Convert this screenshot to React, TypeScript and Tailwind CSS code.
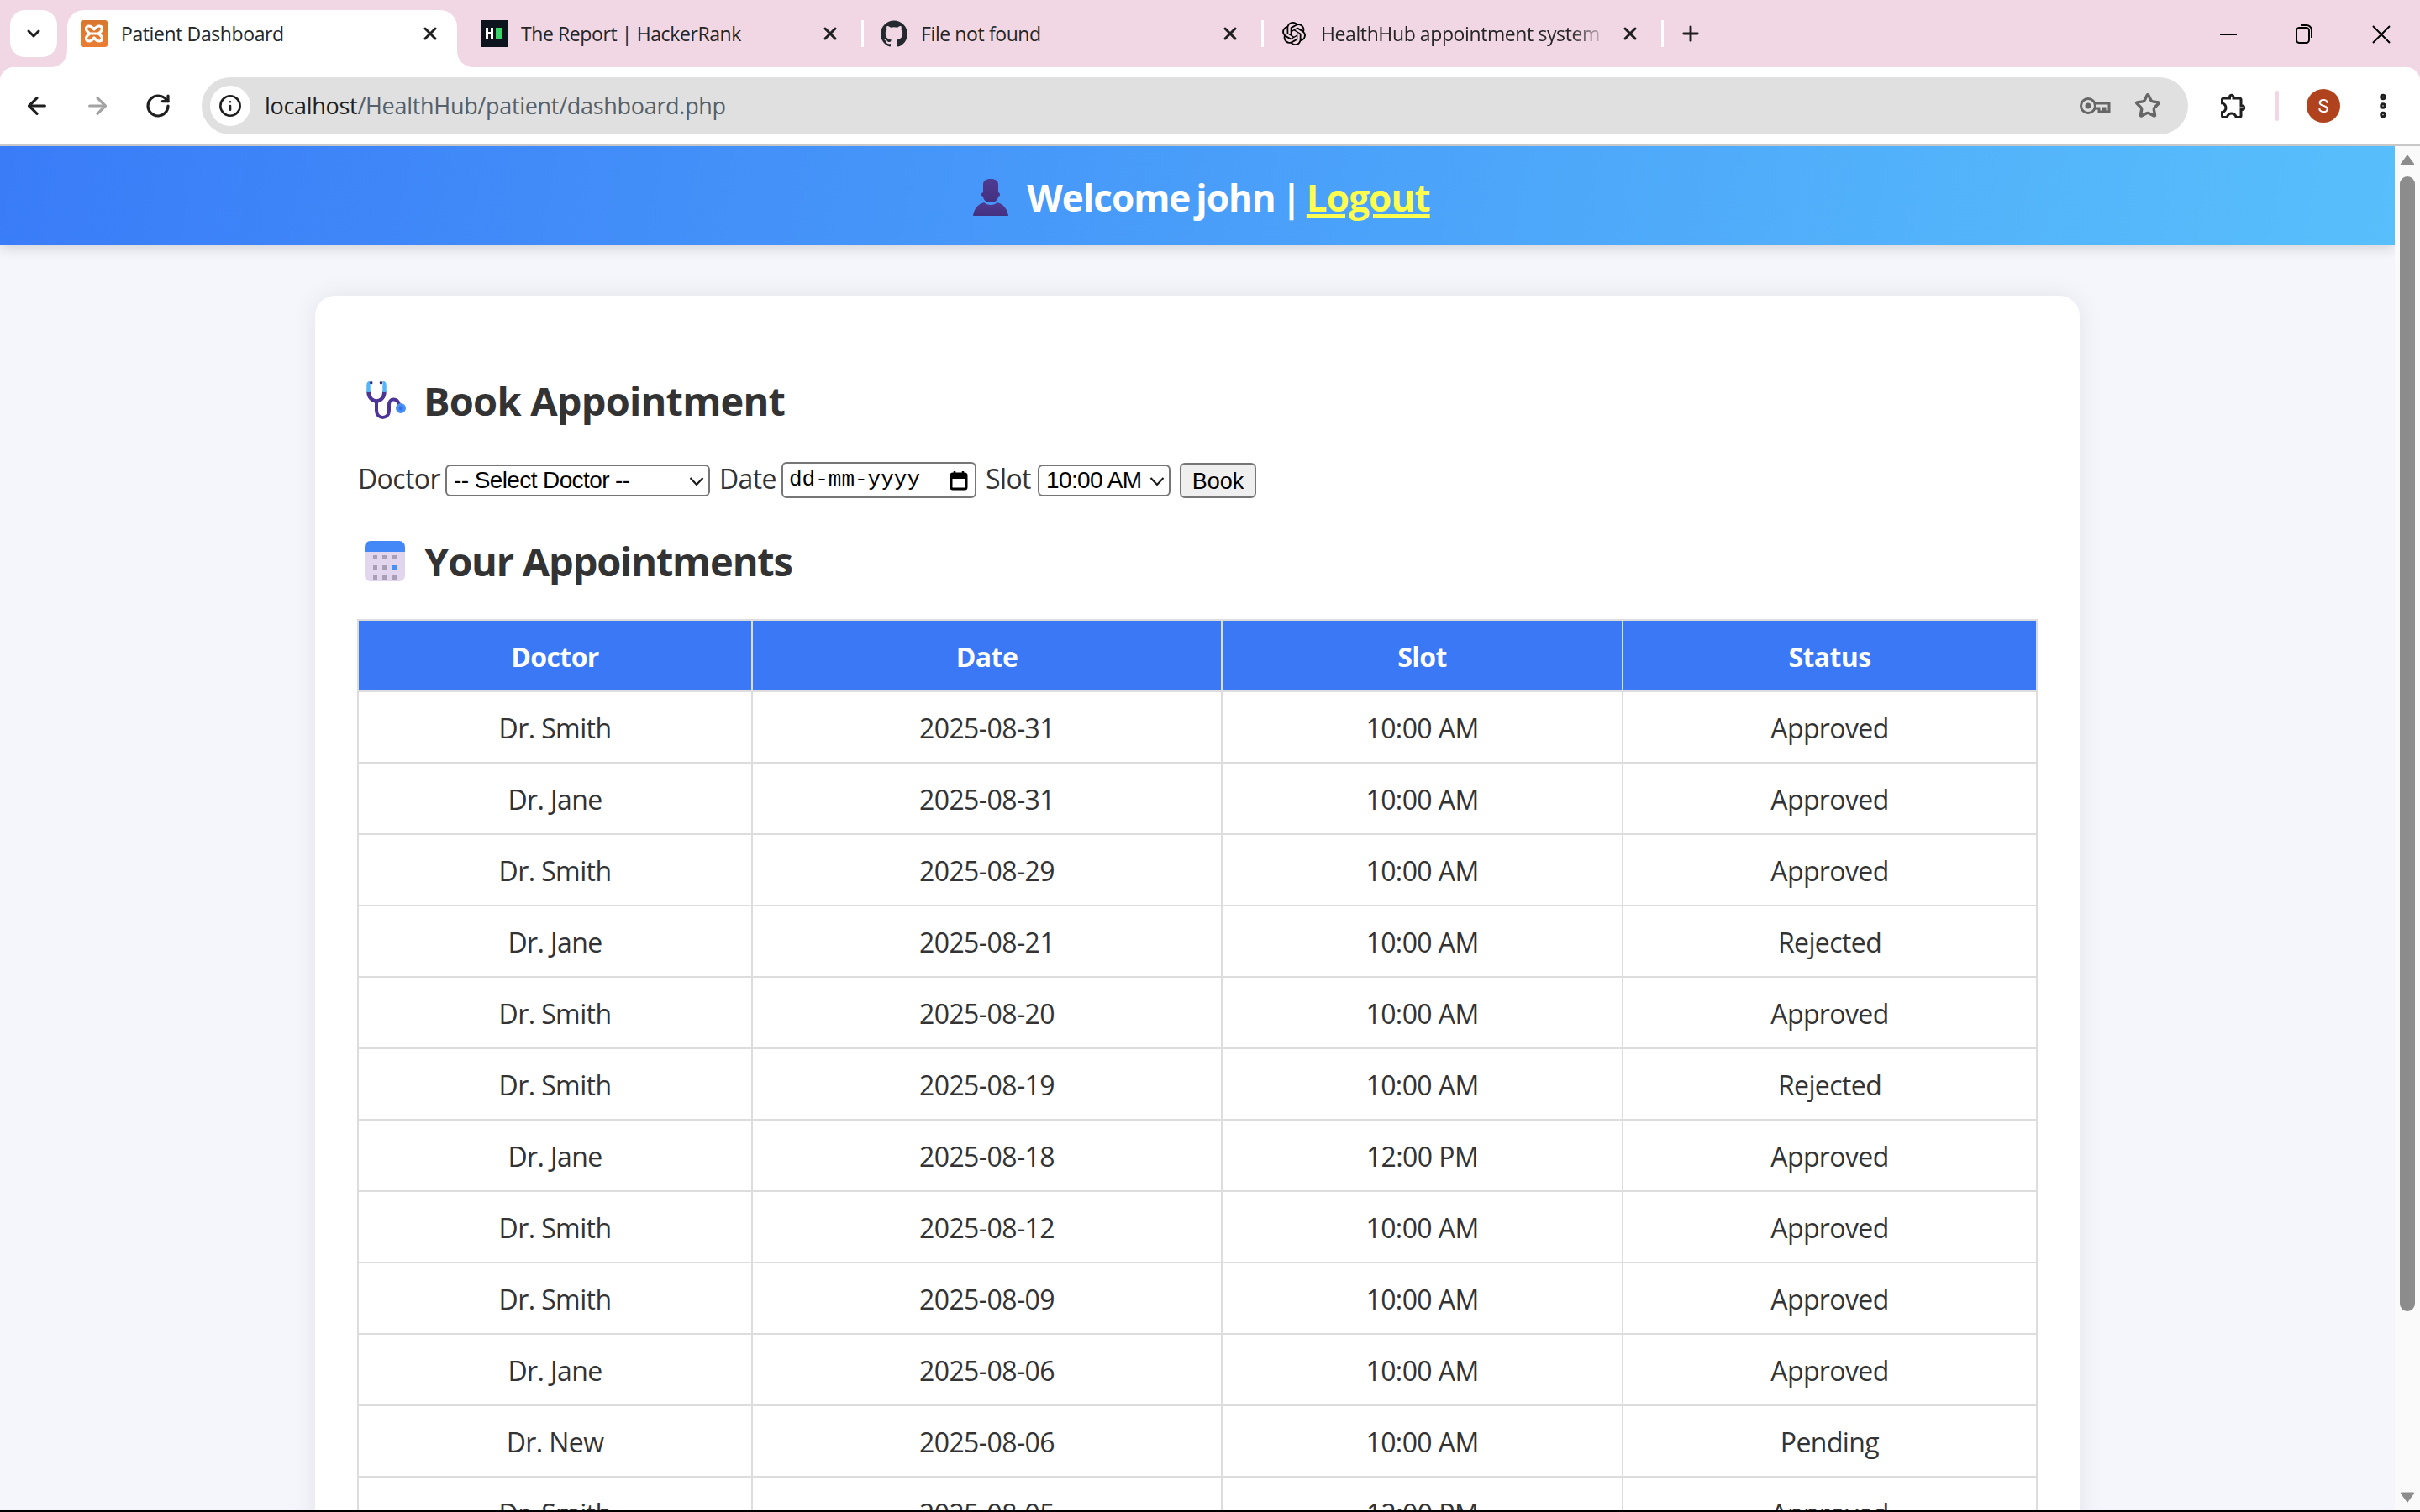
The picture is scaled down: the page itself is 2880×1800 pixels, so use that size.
import { ArrowLeft, ArrowRight, ChevronDown, EllipsisVertical, Info, Plus, RotateCw, Star, X } from "lucide-react";
import { SiGithub, SiOpenai } from "react-icons/si";
import type { ReactNode } from "react";

const sans = "font-['Open_Sans','Noto_Sans',sans-serif]";

const appointments = [
  ["Dr. Smith", "2025-08-31", "10:00 AM", "Approved"],
  ["Dr. Jane", "2025-08-31", "10:00 AM", "Approved"],
  ["Dr. Smith", "2025-08-29", "10:00 AM", "Approved"],
  ["Dr. Jane", "2025-08-21", "10:00 AM", "Rejected"],
  ["Dr. Smith", "2025-08-20", "10:00 AM", "Approved"],
  ["Dr. Smith", "2025-08-19", "10:00 AM", "Rejected"],
  ["Dr. Jane", "2025-08-18", "12:00 PM", "Approved"],
  ["Dr. Smith", "2025-08-12", "10:00 AM", "Approved"],
  ["Dr. Smith", "2025-08-09", "10:00 AM", "Approved"],
  ["Dr. Jane", "2025-08-06", "10:00 AM", "Approved"],
  ["Dr. New", "2025-08-06", "10:00 AM", "Pending"],
  ["Dr. Smith", "2025-08-05", "12:00 PM", "Approved"],
];

function XamppIcon() {
  return (
    <svg viewBox="0 0 32 32" className="w-8 h-8 shrink-0">
      <defs>
        <linearGradient id="xampp" x1="0" y1="0" x2="0" y2="1">
          <stop offset="0" stopColor="#d9772f" />
          <stop offset="1" stopColor="#ea7d34" />
        </linearGradient>
      </defs>
      <rect width="32" height="32" rx="3" fill="url(#xampp)" />
      <path d="M10 7C6 7 5.500 11 8 13.500L10.500 16 8 18.500C5.500 21 6 25 10 25c3 0 4.500-2 6-4 1.500 2 3 4 6 4 4 0 4.500-4 2-6.500L21.500 16 24 13.500C26.500 11 26 7 22 7c-3 0-4.500 2-6 4-1.500-2-3-4-6-4z" fill="none" stroke="#fff" strokeWidth="3.200" strokeLinejoin="round" />
      <path d="M10.500 16h11" stroke="#fff" strokeWidth="3" />
    </svg>
  );
}

function HackerRankIcon() {
  return (
    <svg viewBox="0 0 32 32" className="w-8 h-8 shrink-0">
      <rect width="32" height="32" fill="#0e141e" />
      <path d="M6 9h3v5h3V9h3v14h-3v-6H9v6H6z" fill="#fff" />
      <rect x="18" y="9" width="8" height="14" fill="#39d26b" />
    </svg>
  );
}

function Tab({ icon, title, active, fade }: { icon: ReactNode; title: string; active?: boolean; fade?: boolean }) {
  return (
    <div className="flex items-start w-[476px] shrink-0">
      <div className={`relative flex items-center w-[464px] h-[68px] pb-3 pl-4 pr-5 rounded-t-[20px] ${active ? "bg-white" : ""}`}>
        {active && (
          <>
            <svg viewBox="0 0 20 20" className="absolute bottom-0 -left-5 w-5 h-5"><path d="M20 0v20H0C12 20 20 12 20 0z" fill="#fff" /></svg>
            <svg viewBox="0 0 20 20" className="absolute bottom-0 -right-5 w-5 h-5"><path d="M0 0v20h20C8 20 0 12 0 0z" fill="#fff" /></svg>
          </>
        )}
        <span className="w-8 h-8 flex items-center justify-center shrink-0">{icon}</span>
        <span className={`ml-4 flex-1 overflow-hidden whitespace-nowrap text-[23px] tracking-[-0.4px] text-[#262626] ${fade ? "[mask-image:linear-gradient(to_left,transparent,black_48px)] mr-3" : ""}`}>
          {title}
        </span>
        <X className="w-6 h-6 shrink-0 text-[#1f1f1f]" strokeWidth={3} />
      </div>
      {!active && <span className="ml-[5px] mt-3 w-[3px] h-8 bg-white" />}
    </div>
  );
}

function TabStrip() {
  return (
    <div className="flex items-start h-20 pt-3 pl-3 bg-[#f1d7e4]">
      <div className="flex items-center justify-center w-14 h-14 rounded-[18px] bg-white mr-3">
        <ChevronDown className="w-6 h-6 text-[#1f1f1f]" strokeWidth={3} />
      </div>
      <Tab active icon={<XamppIcon />} title="Patient Dashboard" />
      <Tab icon={<HackerRankIcon />} title="The Report | HackerRank" />
      <Tab icon={<SiGithub className="w-8 h-8 text-[#24292f]" />} title="File not found" />
      <Tab fade icon={<SiOpenai className="w-7 h-7 text-black" />} title="HealthHub appointment system" />
      <Plus className="w-7 h-7 mt-[14px] ml-[14px] text-[#1f1f1f]" strokeWidth={2.5} />
      <div className="ml-auto flex items-center h-14 pr-[31px] gap-[61px] text-black">
        <svg viewBox="0 0 30 30" className="w-[30px] h-[30px] mt-[1px]"><path d="M5 15h20" stroke="currentColor" strokeWidth="2" /></svg>
        <svg viewBox="0 0 30 30" className="w-[30px] h-[30px] mt-[1px]">
          <rect x="5" y="7" width="15" height="18" rx="3.500" fill="none" stroke="currentColor" strokeWidth="2" />
          <path d="M10 4h7a6 6 0 0 1 6 6v9" fill="none" stroke="currentColor" strokeWidth="2" />
        </svg>
        <svg viewBox="0 0 30 30" className="w-[30px] h-[30px] mt-[1px]"><path d="M5 5l20 20M25 5L5 25" stroke="currentColor" strokeWidth="2" /></svg>
      </div>
    </div>
  );
}

function Toolbar() {
  return (
    <div className="flex items-center h-[94px] bg-white rounded-t-[16px] border-b-2 border-[#c8c8c8]">
      <div className="flex items-center w-[240px] pl-7 gap-[40px] text-[#1f1f1f]">
        <ArrowLeft className="w-8 h-8" strokeWidth={2.4} />
        <ArrowRight className="w-8 h-8 text-[#a3a3a3]" strokeWidth={2.4} />
        <RotateCw className="w-8 h-8" strokeWidth={2.4} />
      </div>
      <div className="flex items-center w-[2364px] h-[68px] rounded-full bg-[#e0e0e0] pl-[10px] pr-[32px]">
        <span className="flex items-center justify-center w-12 h-12 rounded-full bg-white">
          <Info className="w-7 h-7 text-[#1f1f1f]" strokeWidth={2.2} />
        </span>
        <span className="ml-[17px] text-[27px] tracking-[-0.3px] text-[#55606b]"><span className="text-[#1f1f1f]">localhost</span>/HealthHub/patient/dashboard.php</span>
        <svg viewBox="0 0 38 24" className="ml-auto w-[38px] h-6 text-[#666]">
          <circle cx="11" cy="12" r="8.500" fill="none" stroke="currentColor" strokeWidth="3" />
          <circle cx="11" cy="12" r="3.500" fill="currentColor" />
          <path d="M19 9h17v10h-5v-4h-2v4h-5v-4h-5" fill="none" stroke="currentColor" strokeWidth="3" />
        </svg>
        <Star className="ml-[28px] w-8 h-8 text-[#666]" strokeWidth={2.6} />
      </div>
      <svg viewBox="0 0 24 24" className="ml-[36px] w-9 h-9 text-[#1f1f1f]">
        <path fill="currentColor" d="M10.5 4.5c.28 0 .5.22.5.5v2h6v6h2.5c.28 0 .5.22.5.5s-.22.5-.5.5H17v6h-2.12c-.68-1.75-2.39-3-4.38-3s-3.7 1.25-4.38 3H4v-2.12c1.75-.68 3-2.39 3-4.38 0-1.99-1.24-3.7-2.99-4.38L4 7h6V5c0-.28.22-.5.5-.5m0-2C9.12 2.5 8 3.62 8 5H4c-1.1 0-1.99.9-1.99 2v3.8h.29c1.49 0 2.7 1.21 2.7 2.7s-1.21 2.7-2.7 2.7H2V20c0 1.1.9 2 2 2h3.8v-.3c0-1.49 1.21-2.7 2.7-2.7s2.7 1.21 2.7 2.7v.3H17c1.1 0 2-.9 2-2v-4c1.38 0 2.5-1.12 2.5-2.5S20.38 11 19 11V7c0-1.1-.9-2-2-2h-4c0-1.38-1.12-2.5-2.5-2.5z" />
      </svg>
      <span className="ml-[32px] w-1 h-9 rounded-full bg-[#f1d7e4]" />
      <span className="ml-[33px] flex items-center justify-center w-10 h-10 rounded-full bg-[#b1421e] text-white text-[22px] font-['Roboto',sans-serif]">S</span>
      <EllipsisVertical className="ml-[33px] w-9 h-9 text-[#1f1f1f]" strokeWidth={3} />
    </div>
  );
}

function PersonIcon() {
  return (
    <svg viewBox="0 0 42 44" className="w-[42px] h-11 shrink-0">
      <defs>
        <linearGradient id="person" x1="0" y1="0" x2="0" y2="1">
          <stop offset="0" stopColor="#4f3a92" />
          <stop offset="1" stopColor="#43307f" />
        </linearGradient>
      </defs>
      <path d="M21 0c6 0 9 2 9 7v9c1.500.5 2 1 2 2.500s-.5 2-2 2.500c-.5 4-3 7-9 7s-8.500-3-9-7c-1.500-.5-2-1-2-2.500s.5-2 2-2.500V7c0-5 3-7 9-7z" fill="url(#person)" />
      <path d="M0 44c1-8 6-14 13-16 2 2 5 3 8 3s6-1 8-3c7 2 12 8 13 16z" fill="url(#person)" />
    </svg>
  );
}

function StethoscopeIcon() {
  return (
    <svg viewBox="0 0 50 46" className="w-[50px] h-[46px] shrink-0" fill="none">
      <path d="M4.500 12C4.500 20 10 23.500 14 23.500S23.500 20 23.500 12" stroke="#4c3596" strokeWidth="4.500" />
      <path d="M4.500 13V4q0-2 2-2M23.500 13V4q0-2-2-2" stroke="#55b5fb" strokeWidth="4.500" />
      <path d="M14 23.500V34c0 6 3.500 9 7.500 9s7.500-3 7.500-9v-6c0-4 2-6.500 5.500-6.500s5.500 2.500 6.500 6" stroke="#4c3596" strokeWidth="4" />
      <circle cx="7.700" cy="1.800" r="1.800" fill="#3a2a78" />
      <circle cx="19.500" cy="1.800" r="1.800" fill="#3a2a78" />
      <circle cx="43" cy="32" r="6" fill="#4a8ff5" />
      <circle cx="43" cy="32" r="2.500" fill="#2f6fe6" />
    </svg>
  );
}

function CalendarIcon() {
  const dots = [0, 1, 2, 3, 4, 5, 6, 7, 8];
  return (
    <div className="w-12 h-12 shrink-0 rounded-[7px] overflow-hidden bg-[#e1d6ee] flex flex-col">
      <div className="h-[13px] bg-[#4487f6]" />
      <div className="grid grid-cols-3 gap-x-[6px] gap-y-[7px] px-[10px] pt-[4px]">
        {dots.map((d) => (
          <span key={d} className={`h-[5px] ${d === 5 ? "bg-[#4a90f0]" : "bg-[#a89fb6]"}`} />
        ))}
      </div>
    </div>
  );
}

function SelectBox({ width, label }: { width: string; label: string }) {
  return (
    <div className={`relative ${width}`}>
      <select className="block w-full h-[38px] appearance-none rounded-[6px] border-2 border-[#767676] bg-white pl-[8px] text-[28px] leading-none text-black font-['Liberation_Sans',sans-serif]">
        <option>{label}</option>
      </select>
      <svg viewBox="0 0 18 12" className="absolute right-[7px] top-[14px] w-[18px] h-3 pointer-events-none">
        <path d="M1.500 2l7.500 8 7.500-8" fill="none" stroke="#1a1a1a" strokeWidth="2.200" />
      </svg>
    </div>
  );
}

function BookingForm() {
  return (
    <form className="flex items-center h-[43px] text-[32px] tracking-[-0.6px] text-[#333]">
      <label className="w-[103px] -mt-1">Doctor</label>
      <SelectBox width="w-[315px] ml-[1px]" label="-- Select Doctor --" />
      <label className="w-[74px] ml-[11px] -mt-1">Date</label>
      <div className="flex items-center justify-between w-[232px] h-[43px] rounded-[6px] border-2 border-[#767676] bg-white pl-[7px] pr-[8px] font-['Liberation_Mono',monospace] text-[26px] tracking-normal text-black">
        <span>dd-mm-yyyy</span>
        <svg viewBox="0 0 22 24" className="w-[22px] h-6">
          <rect x="2" y="4" width="18" height="18" rx="2" fill="none" stroke="#000" strokeWidth="3" />
          <path d="M2 8h18" stroke="#000" strokeWidth="4" />
          <path d="M6 1v4M16 1v4" stroke="#000" strokeWidth="2.500" />
        </svg>
      </div>
      <label className="w-[62px] ml-[11px] -mt-1">Slot</label>
      <SelectBox width="w-[158px]" label="10:00 AM" />
      <button type="button" className="ml-[11px] w-[91px] h-[42px] rounded-[6px] border-2 border-[#767676] bg-[#efefef] text-[27px] tracking-normal text-black font-['Liberation_Sans',sans-serif]">
        Book
      </button>
    </form>
  );
}

function SectionTitle({ icon, children, className }: { icon: ReactNode; children: ReactNode; className: string }) {
  return (
    <h2 className={`flex items-center h-[60px] pl-[8px] text-[47px] font-bold text-[#333] ${className}`}>
      {icon}
      {children}
    </h2>
  );
}

function AppointmentsTable() {
  return (
    <table className="mt-[39px] w-[1998px] table-fixed border-collapse text-center text-[32px] tracking-[-0.6px] text-[#333]">
      <colgroup>
        <col className="w-[469px]" />
        <col className="w-[559px]" />
        <col className="w-[477px]" />
        <col className="w-[493px]" />
      </colgroup>
      <thead>
        <tr className="bg-[#3a78f6] text-white">
          {["Doctor", "Date", "Slot", "Status"].map((h) => (
            <th key={h} className="h-[85px] border-2 border-[#ddd] p-0 pt-[2px] font-bold">{h}</th>
          ))}
        </tr>
      </thead>
      <tbody>
        {appointments.map((row, i) => (
          <tr key={i}>
            {row.map((cell, j) => (
              <td key={j} className="h-[85px] border-2 border-[#ddd] p-0 pt-[3px]">{cell}</td>
            ))}
          </tr>
        ))}
      </tbody>
    </table>
  );
}

function Scrollbar() {
  return (
    <div className="flex flex-col items-center w-[30px] shrink-0 bg-[#fafafa] pt-[9px] pb-[8px]">
      <svg viewBox="0 0 18 14" className="w-[18px] h-[14px]"><path d="M9 1l8 11a1 1 0 0 1-1 1.500H2A1 1 0 0 1 1 12z" fill="#8c8c8c" /></svg>
      <div className="mt-[13px] w-[18px] h-[1351px] rounded-full bg-[#8c8c8c]" />
      <svg viewBox="0 0 18 14" className="mt-auto w-[18px] h-[14px]"><path d="M9 13L1 2a1 1 0 0 1 1-1.500h14A1 1 0 0 1 17 2z" fill="#8c8c8c" /></svg>
    </div>
  );
}

export default function App() {
  return (
    <div className={`flex flex-col h-screen overflow-hidden bg-[#f1d7e4] ${sans}`}>
      <TabStrip />
      <Toolbar />
      <div className="flex flex-1 min-h-0 border-b-2 border-black bg-[#f4f6fb]">
        <main className="flex-1 min-w-0 overflow-hidden">
          <header className="relative z-10 flex items-center justify-center gap-[22px] h-[118px] bg-[linear-gradient(100deg,#3a7cf8,#58bffb)] shadow-[0_4px_14px_rgba(0,0,0,0.14)] pt-[3px] pl-[10px] text-[44px] font-bold text-white">
            <PersonIcon />
            <span className="tracking-[-1px] [word-spacing:-3.5px]">Welcome john | <a className="tracking-[-0.9px] text-[#ffff4d] underline">Logout</a></span>
          </header>
          <section className="w-[2100px] mx-auto mt-[60px] pt-[95px] px-[50px] pb-10 rounded-[24px] bg-white shadow-[0_0_30px_rgba(0,0,0,0.08)]">
            <SectionTitle icon={<StethoscopeIcon />} className="pl-[9px] gap-[20px] tracking-[-0.8px]">Book Appointment</SectionTitle>
            <div className="mt-[43px] ml-[1px]"><BookingForm /></div>
            <div className="mt-[45px]">
              <SectionTitle icon={<CalendarIcon />} className="pl-[9px] gap-[23px] tracking-[-1.2px]">Your Appointments</SectionTitle>
            </div>
            <AppointmentsTable />
          </section>
        </main>
        <Scrollbar />
      </div>
    </div>
  );
}
